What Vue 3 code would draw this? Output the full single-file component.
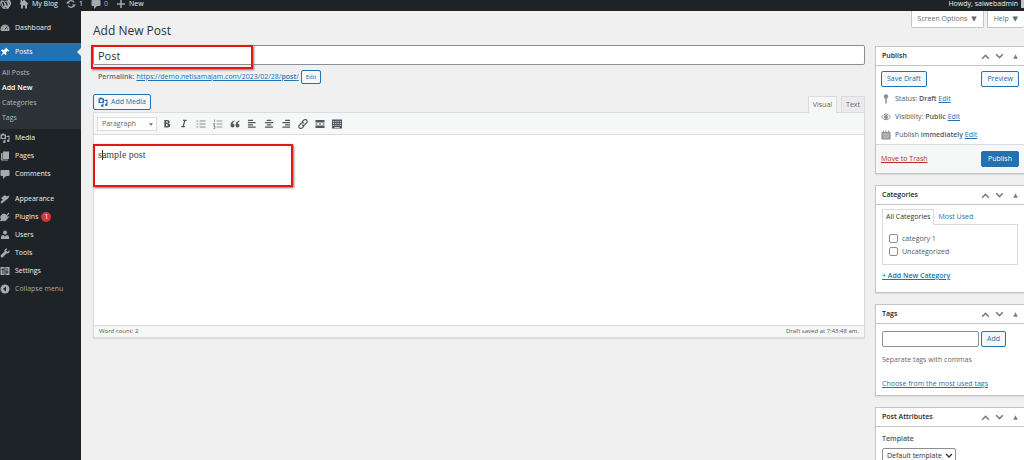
<script setup>
import { ref } from 'vue'

const icons = {
  dashboard: '<path d="M10 3a9 9 0 0 0-8 13h16A9 9 0 0 0 10 3Z" fill="currentColor"/><path d="m10 13 4-6M5 12h1M6 7l1 1M10 5v1M14 12h2" stroke="#1d2327" stroke-width="1.8"/>',
  pin: '<path d="m12 1 7 7-2 1-2-1-3 3 1 4-2 1-3-3-7 6 5-8-4-4 2-2 4 1 3-3Z" fill="currentColor"/>',
  media: '<path fill-rule="evenodd" d="M1 3h2l1-2h4l1 2h3v9H1ZM6.500 4.500a3 3 0 1 0 .1 0ZM13 6l6-1v10a2.500 2.500 0 1 1-2-2V8h-4ZM9 13h2v4a2.500 2.500 0 1 1-2-2Z" fill="currentColor"/>',
  pages: '<path d="M6 1h12v15H6ZM2 4h3v13h11v2H2Z" fill="currentColor"/>',
  comment: '<path d="M3 2h14q2 0 2 2v8q0 2-2 2h-5l-6 6v-6H3q-2 0-2-2V4q0-2 2-2Z" fill="currentColor"/>',
  brush: '<path d="m10 2 3 3 6-2-3 7-3 1-4 4-4-4-3-3ZM7 10l3 3-6 6-2-1-1-2Z" fill="currentColor"/>',
  plug: '<path d="m11 4 2 2 4-5 2 2-5 5 2 2 2-2 1 1-7 8q-4 3-7 0l-3 2-2-2 2-3q-3-4 0-7l4-4Z" fill="currentColor"/>',
  user: '<circle cx="10" cy="5" r="4" fill="currentColor"/><path d="M2 18v-4q0-4 5-4l3 3 3-3q5 0 5 4v4Z" fill="currentColor"/>',
  tool: '<path d="M18 5 15 8l-3-3 3-4q-5-1-6 3v3l-7 7q-2 2 0 4t4 0l7-7q7 1 6-6Z" fill="currentColor"/>',
  settings: '<path d="M1 2h18v16H1Z" fill="currentColor"/><path d="M6 4v12M14 4v12M3 7h5M11 12h6M10 2v16" stroke="#1d2327" stroke-width="1.7"/>',
  collapse: '<circle cx="10" cy="10" r="9" fill="currentColor"/><path d="m12 5-6 5 6 5Z" fill="#1d2327"/>',
  home: '<path d="m10 1 9 9-1 1-2-1v9h-4v-6H8v6H4v-9l-2 1-1-1 2-2V2h3v3Z" fill="currentColor"/>',
  update: '<path d="M4 8a6.500 6.500 0 0 1 12-1M16 12a6.500 6.500 0 0 1-12 1" fill="none" stroke="currentColor" stroke-width="2.500"/><path d="m0 9 4-5 4 5ZM12 11l4 5 4-5Z" fill="currentColor"/>',
  plus: '<path d="M10 2v16M2 10h16" stroke="currentColor" stroke-width="3"/>',
  wp: '<circle cx="10" cy="10" r="9" fill="none" stroke="currentColor" stroke-width="1.500"/><path d="m2 6 5 13 3-8 3 7 3-8q1-3-1-5l2-1 2 6-5 9M3 6h4l4 11M9 6h4l3 9" fill="none" stroke="currentColor" stroke-width="2"/>',
  key: '<circle cx="10" cy="5" r="4.500" fill="currentColor"/><path d="M10 8v11" stroke="currentColor" stroke-width="3"/>',
  eye: '<path d="M1 10q9-12 18 0-9 11-18 0Z" fill="none" stroke="currentColor" stroke-width="2"/><circle cx="10" cy="10" r="4" fill="currentColor"/>',
  calendar: '<path d="M1 4h18v15H1Z" fill="currentColor"/><path d="M5 1v5M10 1v5M15 1v5" stroke="currentColor" stroke-width="2"/><path d="M3 8h14M6 10v7M10 10v7M14 10v7" stroke="#fff" stroke-width="1.200"/>',
  bold: '<path d="M4 2h7q5 0 5 4T13 9.500q4 1 4 4.500 0 5-6 5H4Zm4 3v3.500h2q2 0 2-2T10 5Zm0 6v4.500h2q2 0 2-2t-2-2.500Z" fill="currentColor" fill-rule="evenodd"/>',
  italic: '<path d="M8 3h8M4 17h8M12 3 8 17" fill="none" stroke="currentColor" stroke-width="2.800"/>',
  ul: '<path d="M7 4h12M7 10h12M7 16h12M1 4h3M1 10h3M1 16h3" stroke="currentColor" stroke-width="1.800"/>',
  ol: '<path d="M7 4h12M7 10h12M7 16h12M3 1v5M1 9h3l-3 3h3M1 14h3v5H1M2 16h2" fill="none" stroke="currentColor" stroke-width="1.500"/>',
  quote: '<path d="M9 3Q1 5 1 12q0 5 4 5t4-4-4-4q1-3 4-4ZM19 3q-8 2-8 9 0 5 4 5t4-4-4-4q1-3 4-4Z" fill="currentColor"/>',
  left: '<path d="M1 3h11M1 8h17M1 13h11M1 18h17" stroke="currentColor" stroke-width="2.500"/>',
  center: '<path d="M5 3h10M1 8h18M5 13h10M1 18h18" stroke="currentColor" stroke-width="2.500"/>',
  right: '<path d="M8 3h11M2 8h17M8 13h11M2 18h17" stroke="currentColor" stroke-width="2.500"/>',
  link: '<path d="m8 6 4-4q3-2 5 0t1 5l-5 5q-3 2-5-1M12 14l-4 4q-3 2-5 0t-1-5l5-5q3-2 5 1" fill="none" stroke="currentColor" stroke-width="2.300"/>',
  more: '<path d="M1 2h18v5H1ZM1 13h18v5H1ZM1 9h4v2H1ZM8 9h4v2H8ZM15 9h4v2h-4Z" fill="currentColor"/>',
  keyboard: '<path d="M0 1h20v18H0Z" fill="currentColor"/><path d="M2 5h16M2 9h16M2 13h16" stroke="#f6f7f7" stroke-width="1.500" stroke-dasharray="2 1.500"/><path d="M5 17h10" stroke="#f6f7f7" stroke-width="1.500"/>'
}
const submenu = ['All Posts', 'Add New', 'Categories', 'Tags']
const menu = [
  ['media', 'Media'], ['pages', 'Pages'], ['comment', 'Comments'], ['brush', 'Appearance'],
  ['plug', 'Plugins'], ['user', 'Users'], ['tool', 'Tools'], ['settings', 'Settings']
]
const tools = [
  ['bold', 'Bold'], ['italic', 'Italic'], ['ul', 'Bulleted list'], ['ol', 'Numbered list'], ['quote', 'Blockquote'],
  ['left', 'Align left'], ['center', 'Align center'], ['right', 'Align right'], ['link', 'Insert link'],
  ['more', 'Read more'], ['keyboard', 'Toolbar toggle']
]
const publishing = [
  ['key', 'Status:', 'Draft'], ['eye', 'Visibility:', 'Public'], ['calendar', 'Publish', 'immediately']
]
const boxes = ['Publish', 'Categories', 'Tags', 'Post Attributes']
const title = ref('Post')
const body = ref('sample post')
const tag = ref('')
</script>

<template>
  <div class="page">
    <header class="adminbar">
      <a href="#" aria-label="WordPress"><svg class="icon big" viewBox="0 0 20 20" v-html="icons.wp" /></a>
      <a href="#" class="site"><svg class="icon" viewBox="0 0 20 20" v-html="icons.home" />My Blog</a>
      <a href="#"><svg class="icon" viewBox="0 0 20 20" v-html="icons.update" />1</a>
      <a href="#" class="dim"><svg class="icon" viewBox="0 0 20 20" v-html="icons.comment" />0</a>
      <a href="#"><svg class="icon" viewBox="0 0 20 20" v-html="icons.plus" />New</a>
      <a href="#" class="howdy">Howdy, saiwebadmin<span class="avatar" /></a>
    </header>
    <div class="shell">
      <nav class="sidebar">
        <a href="#" class="item first"><svg class="icon" viewBox="0 0 20 20" v-html="icons.dashboard" />Dashboard</a>
        <a href="#" class="item current"><svg class="icon" viewBox="0 0 20 20" v-html="icons.pin" />Posts</a>
        <div class="submenu">
          <a v-for="s in submenu" :key="s" href="#" :class="{ active: s === 'Add New' }">{{ s }}</a>
        </div>
        <a v-for="[icon, name] in menu" :key="name" href="#" class="item" :class="{ spaced: name === 'Appearance' }">
          <svg class="icon" viewBox="0 0 20 20" v-html="icons[icon]" />{{ name }}<span v-if="name === 'Plugins'" class="badge">1</span>
        </a>
        <button class="item collapse"><svg class="icon" viewBox="0 0 20 20" v-html="icons.collapse" />Collapse menu</button>
      </nav>
      <main class="main">
        <div class="heading">
          <h1>Add New Post</h1>
          <div class="screen-links">
            <button>Screen Options <span>▼</span></button>
            <button>Help <span>▼</span></button>
          </div>
        </div>
        <div class="columns">
          <section class="content">
            <div class="title-wrap">
              <input v-model="title" class="title" aria-label="Post title">
              <div class="mark mark-title" />
            </div>
            <div class="permalink">
              <b>Permalink:</b>
              <a href="#">https://demo.netisamajam.com/2023/02/28/<b>post</b>/</a>
              <button class="btn small">Edit</button>
            </div>
            <div class="media-row">
              <button class="btn add-media"><svg class="icon" viewBox="0 0 20 20" v-html="icons.media" />Add Media</button>
              <div class="tabs"><button class="on">Visual</button><button>Text</button></div>
            </div>
            <div class="editor">
              <div class="toolbar">
                <div class="select format">
                  <select aria-label="Format"><option>Paragraph</option></select>
                  <svg viewBox="0 0 6 4"><path d="M0 0h6L3 4Z" fill="currentColor" /></svg>
                </div>
                <button v-for="[icon, name] in tools" :key="name" :class="['tool', icon]" :aria-label="name">
                  <svg class="icon" viewBox="0 0 20 20" v-html="icons[icon]" />
                </button>
              </div>
              <div class="writing">
                <textarea v-model="body" aria-label="Post content" spellcheck="false" />
                <span class="caret" />
                <div class="mark mark-body" />
              </div>
              <div class="status"><span>Word count: 2</span><span>Draft saved at 7:43:48 am.</span></div>
            </div>
          </section>
          <aside class="side">
            <section v-for="box in boxes" :key="box" class="box">
              <div class="box-head">
                <h2>{{ box }}</h2>
                <button aria-label="Move up"><svg viewBox="0 0 8 8"><path d="m1 6 3-3 3 3" fill="none" stroke="currentColor" stroke-width="1.300" /></svg></button>
                <button aria-label="Move down"><svg viewBox="0 0 8 8"><path d="m1 2 3 3 3-3" fill="none" stroke="currentColor" stroke-width="1.300" /></svg></button>
                <button aria-label="Toggle panel" class="toggle"><svg viewBox="0 0 8 8"><path d="M2 6h4L4 2Z" fill="currentColor" /></svg></button>
              </div>
              <template v-if="box === 'Publish'">
                <div class="publish">
                  <div class="row"><button class="btn">Save Draft</button><button class="btn">Preview</button></div>
                  <p v-for="[icon, label, value] in publishing" :key="label">
                    <svg class="icon" viewBox="0 0 20 20" v-html="icons[icon]" />
                    <span>{{ label }} <b>{{ value }}</b> <a href="#">Edit</a></span>
                  </p>
                </div>
                <div class="publish-foot"><a href="#" class="trash">Move to Trash</a><button class="btn primary">Publish</button></div>
              </template>
              <div v-else-if="box === 'Categories'" class="inside categories">
                <div class="cat-tabs"><button class="on">All Categories</button><button>Most Used</button></div>
                <div class="cat-list">
                  <label><input type="checkbox">category 1</label>
                  <label><input type="checkbox">Uncategorized</label>
                </div>
                <a href="#" class="new-cat">+ Add New Category</a>
              </div>
              <div v-else-if="box === 'Tags'" class="inside tags">
                <div class="tag-row"><input v-model="tag" aria-label="Add new tag"><button class="btn">Add</button></div>
                <p>Separate tags with commas</p>
                <a href="#">Choose from the most used tags</a>
              </div>
              <div v-else class="inside attributes">
                <label for="template">Template</label>
                <div class="select template">
                  <select id="template"><option>Default template</option></select>
                  <svg viewBox="0 0 8 6"><path d="m1 1 3 3 3-3" fill="none" stroke="currentColor" stroke-width="1.300" /></svg>
                </div>
              </div>
            </section>
          </aside>
        </div>
      </main>
    </div>
  </div>
</template>

<style>
body { background: #f0f0f1; }
</style>

<style scoped>
* { box-sizing: border-box; }
.page { height: 100vh; overflow: hidden; display: flex; flex-direction: column; font: 7px/10px "Open Sans", "Noto Sans", sans-serif; color: #50575e; background: #f0f0f1; }
button, input, select, textarea { font: inherit; color: inherit; margin: 0; padding: 0; border: 0; background: none; border-radius: 0; outline: none; }
a { color: #2271b1; }
h1, h2, p { margin: 0; }
.icon { width: 10px; height: 10px; flex: none; display: block; }
.adminbar { height: 11px; flex: none; display: flex; align-items: center; gap: 8px; background: #1d2327; padding-bottom: 4px; }
.adminbar a { display: flex; align-items: center; gap: 3px; color: #f0f0f1; text-decoration: none; }
.adminbar .icon { color: #a7aaad; }
.adminbar .big { width: 11px; height: 11px; }
.adminbar .dim { color: #a7aaad; }
.adminbar .howdy { margin-left: auto; }
.avatar { width: 3px; height: 9px; background: #c3c4c7; }
.shell { flex: 1; min-height: 0; display: flex; }
.sidebar { width: 81px; flex: none; background: #1d2327; }
.item { display: flex; align-items: center; width: 100%; height: 18px; gap: 5px; color: #f0f0f1; text-decoration: none; text-align: left; }
.item .icon { color: #a7aaad; }
.first { margin: 8px 0 6px; }
.current { background: #2271b1; color: #fff; position: relative; }
.current .icon { color: #fff; }
.current::after { content: ""; position: absolute; right: 0; top: 5px; border: 4px solid transparent; border-right-color: #f0f0f1; border-left: 0; }
.submenu { background: #2c3338; padding: 4px 2px; display: flex; flex-direction: column; }
.submenu a { line-height: 15px; color: #b4b9be; text-decoration: none; }
.submenu .active { color: #fff; font-weight: 600; }
.spaced { margin-top: 7px; }
.badge { width: 10px; height: 10px; border-radius: 50%; background: #d63638; color: #fff; text-align: center; margin-left: -2px; }
.collapse { color: #a7aaad; }
.main { flex: 1; min-width: 0; padding-left: 12px; }
.heading { display: flex; justify-content: space-between; height: 34px; }
h1 { font-size: 12px; line-height: 16px; font-weight: 400; color: #2c3338; padding-top: 12px; }
.screen-links { display: flex; gap: 3px; align-items: flex-start; }
.screen-links button { height: 17px; padding: 0 6px; background: #fff; border: 1px solid #c3c4c7; border-top: 0; border-radius: 0 0 2px 2px; color: #646970; white-space: nowrap; }
.screen-links button:last-child { border-right: 0; }
.screen-links span { font-family: "DejaVu Sans", sans-serif; margin-left: 2px; }
.columns { display: grid; grid-template-columns: minmax(0, 1fr) 149px; gap: 10px; }
.title-wrap { position: relative; }
.title { display: block; width: 100%; height: 20px; padding: 0 4px; background: #fff; border: 1px solid #8c8f94; border-radius: 2px; font-size: 11px; color: #2c3338; }
.mark { position: absolute; border: 2px solid #e81515; box-shadow: 1px 1px 2px #777; pointer-events: none; }
.mark-title { left: -2px; top: 0; width: 162px; height: 24px; }
.permalink { display: flex; align-items: center; gap: 2px; height: 23px; padding-left: 5px; color: #646970; }
.permalink b { font-weight: 600; }
.btn { height: 16px; padding: 0 5px; border: 1px solid #2271b1; border-radius: 2px; background: #f6f7f7; color: #2271b1; white-space: nowrap; }
.small { height: 14px; padding: 0 4px; font-size: 6px; }
.media-row { display: flex; justify-content: space-between; align-items: flex-end; height: 24px; padding-top: 6px; }
.add-media { display: flex; align-items: center; gap: 3px; margin-bottom: 2px; padding: 0 4px; }
.tabs { display: flex; gap: 4px; height: 16px; }
.tabs button { padding: 0 4px; border: 1px solid #dcdcde; border-bottom: 0; color: #646970; background: #ebebeb; }
.tabs .on { background: #f6f7f7; margin-bottom: -1px; position: relative; z-index: 1; }
.editor { border: 1px solid #dcdcde; background: #fff; box-shadow: 0 1px 1px #ddd; }
.toolbar { display: flex; align-items: center; gap: 7px; height: 22px; padding: 0 3px; background: #f6f7f7; border-bottom: 1px solid #dcdcde; }
.select { position: relative; background: #fff; border: 1px solid #dcdcde; }
.select select { appearance: none; width: 100%; height: 100%; display: block; padding: 0 4px; }
.select svg { position: absolute; pointer-events: none; }
.format { width: 60px; height: 14px; margin-right: -2px; color: #646970; }
.format svg { width: 4px; height: 3px; right: 3px; top: 5px; }
.tool { color: #50575e; }
.tool .icon { width: 10px; height: 10px; }
.tool.italic .icon, .tool.left .icon, .tool.center .icon, .tool.right .icon { height: 9px; }
.tool.bold .icon { height: 9px; }
.tool.ul, .tool.ol { color: #787c82; }
.writing { position: relative; height: 190px; }
.writing textarea { display: block; width: 100%; height: 100%; resize: none; padding: 14px 4px; font: 10px/12px "Liberation Serif", serif; color: #444; }
.caret { position: absolute; left: 8px; top: 15px; width: 1px; height: 10px; background: #333; }
.mark-body { left: -1px; top: 9px; width: 200px; height: 43px; }
.status { display: flex; justify-content: space-between; height: 12px; padding: 0 5px; border-top: 1px solid #dcdcde; background: #f6f7f7; font-size: 6px; }
.side { display: flex; flex-direction: column; gap: 11px; padding-top: 1px; }
.box { background: #fff; border: 1px solid #c3c4c7; border-right: 0; box-shadow: 0 1px 1px #ddd; }
.box-head { height: 19px; display: flex; align-items: center; padding: 0 4px 0 6px; border-bottom: 1px solid #c3c4c7; }
h2 { font-size: 7px; line-height: 10px; font-weight: 600; color: #1d2327; margin-right: auto; }
.box-head button { width: 14px; height: 10px; color: #787c82; display: grid; place-items: center; }
.box-head svg { width: 9px; height: 9px; }
.box-head .toggle { width: 10px; margin-left: 4px; }
.publish { padding: 5px 5px 0; }
.row { display: flex; justify-content: space-between; margin-bottom: 3px; }
.publish p { display: flex; align-items: center; gap: 4px; height: 18px; }
.publish p .icon { color: #8c8f94; }
b { font-weight: 600; }
.publish-foot { display: flex; justify-content: space-between; align-items: center; height: 29px; padding: 0 5px; border-top: 1px solid #dcdcde; background: #f6f7f7; }
.trash { color: #b32d2e; }
.primary { background: #2271b1; color: #fff; padding: 0 6px; }
.inside { padding: 0 6px; }
.categories { padding-top: 4px; padding-bottom: 11px; }
.cat-tabs { display: flex; }
.cat-tabs button { height: 15px; padding: 0 3px; color: #2271b1; border: 1px solid transparent; }
.cat-tabs .on { color: #2c3338; background: #fff; border-color: #dcdcde; border-bottom-color: #fff; position: relative; margin-bottom: -1px; height: 16px; }
.cat-list { border: 1px solid #dcdcde; height: 41px; padding: 7px 6px; }
.cat-list label { display: flex; align-items: center; height: 13px; gap: 4px; }
.cat-list input { appearance: none; width: 9px; height: 9px; border: 1px solid #8c8f94; border-radius: 2px; background: #fff; }
.new-cat { display: inline-block; margin-top: 6px; font-weight: 600; }
.tags { padding-top: 7px; padding-bottom: 6px; }
.tag-row { display: flex; gap: 2px; }
.tag-row input { width: 97px; height: 16px; padding: 0 4px; border: 1px solid #8c8f94; border-radius: 2px; }
.tags p { margin: 8px 0 14px; color: #646970; }
.attributes { padding-top: 7px; }
.attributes label { display: block; font-weight: 600; }
.template { width: 74px; height: 16px; margin-top: 4px; border-color: #8c8f94; border-radius: 2px; color: #2c3338; }
.template svg { width: 8px; height: 6px; right: 2px; top: 4px; }
</style>
